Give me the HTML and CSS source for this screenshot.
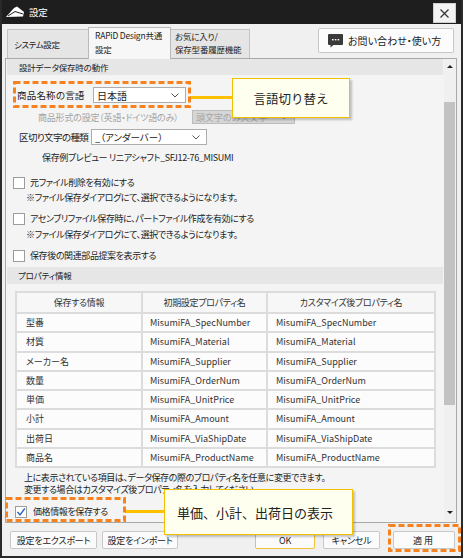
FILE: index.html
```html
<!DOCTYPE html>
<html lang="ja">
<head>
<meta charset="utf-8">
<title>設定</title>
<link rel="stylesheet" href="styles.css">
</head>
<body>
<div class="window">
  <div class="titlebar">
    <svg class="app-icon" width="20" height="12" viewBox="0 0 20 12"><polygon points="1,11 9,2 12,0.5 19,6 18,10.5" fill="#fff"/><polyline points="3,10 10,5.5 18,8" stroke="#1e1e1e" stroke-width="1" fill="none"/></svg>
    <span class="title">設定</span>
    <div class="close"><svg width="9" height="9" viewBox="0 0 9 9"><path d="M0.5 0.5L8.5 8.5M8.5 0.5L0.5 8.5" stroke="#333" stroke-width="1.2"/></svg></div>
  </div>
  <div class="tabrow">
    <div class="tab tab1">システム設定</div>
    <div class="tab tab-active">RAPiD Design共通<br>設定</div>
    <div class="tab tab3">お気に入り/<br>保存型番履歴機能</div>
    <div class="help-btn">
      <svg class="chat-icon" width="15" height="14" viewBox="0 0 15 14"><path d="M1 0h13a1 1 0 0 1 1 1v9a1 1 0 0 1-1 1H5.5L2.5 13.5V11H1a1 1 0 0 1-1-1V1a1 1 0 0 1 1-1z" fill="#3a3a3a"/><rect x="4" y="5" width="1.6" height="1.4" fill="#fff"/><rect x="6.8" y="5" width="1.6" height="1.4" fill="#fff"/><rect x="9.6" y="5" width="1.6" height="1.4" fill="#fff"/></svg>
      <span>お問い合わせ・使い方</span>
    </div>
  </div>
  <div class="panel">
    <div class="content">
      <div class="section-head">設計データ保存時の動作</div>
      <div class="row row-lang">
        <span class="lbl lbl-lang">商品名称の言語</span>
        <div class="select sel-lang"><span>日本語</span><svg width="8" height="5" viewBox="0 0 8 5"><polyline points="0.5,0.5 4,4 7.5,0.5" fill="none" stroke="#555" stroke-width="1"/></svg></div>
      </div>
      <div class="row row-format">
        <span class="disabled-text">商品形式の設定（英語・ドイツ語のみ）</span>
        <div class="select sel-disabled"><span>頭文字のみ大文字</span><svg width="8" height="5" viewBox="0 0 8 5"><polyline points="0.5,0.5 4,4 7.5,0.5" fill="none" stroke="#9a9a9a" stroke-width="1"/></svg></div>
      </div>
      <div class="row row-sep">
        <span class="lbl lbl-sep">区切り文字の種類</span>
        <div class="select sel-sep"><span>_（アンダーバー）</span><svg width="8" height="5" viewBox="0 0 8 5"><polyline points="0.5,0.5 4,4 7.5,0.5" fill="none" stroke="#555" stroke-width="1"/></svg></div>
      </div>
      <div class="preview">保存例プレビュー リニアシャフト_SFJ12-76_MISUMI</div>
      <div class="cb-row cb-first"><span class="checkbox"></span><span class="cb-label">元ファイル削除を有効にする</span></div>
      <div class="note">※ファイル保存ダイアログにて、選択できるようになります。</div>
      <div class="cb-row"><span class="checkbox"></span><span class="cb-label">アセンブリファイル保存時に、パートファイル作成を有効にする</span></div>
      <div class="note note2">※ファイル保存ダイアログにて、選択できるようになります。</div>
      <div class="cb-row"><span class="checkbox"></span><span class="cb-label">保存後の関連部品提案を表示する</span></div>
      <div class="section-head section-head2">プロパティ情報</div>
      <table class="props">
        <colgroup><col class="c1"><col class="c2"><col class="c3"></colgroup>
        <thead>
          <tr><th>保存する情報</th><th>初期設定プロパティ名</th><th>カスタマイズ後プロパティ名</th></tr>
        </thead>
        <tbody>
          <tr><td>型番</td><td>MisumiFA_SpecNumber</td><td>MisumiFA_SpecNumber</td></tr>
          <tr><td>材質</td><td>MisumiFA_Material</td><td>MisumiFA_Material</td></tr>
          <tr><td>メーカー名</td><td>MisumiFA_Supplier</td><td>MisumiFA_Supplier</td></tr>
          <tr><td>数量</td><td>MisumiFA_OrderNum</td><td>MisumiFA_OrderNum</td></tr>
          <tr><td>単価</td><td>MisumiFA_UnitPrice</td><td>MisumiFA_UnitPrice</td></tr>
          <tr><td>小計</td><td>MisumiFA_Amount</td><td>MisumiFA_Amount</td></tr>
          <tr><td>出荷日</td><td>MisumiFA_ViaShipDate</td><td>MisumiFA_ViaShipDate</td></tr>
          <tr><td>商品名</td><td>MisumiFA_ProductName</td><td>MisumiFA_ProductName</td></tr>
        </tbody>
      </table>
      <div class="help-text">上に表示されている項目は、データ保存の際のプロパティ名を任意に変更できます。<br>変更する場合はカスタマイズ後プロパティ名を入力してください。</div>
      <div class="cb-row cb-price"><span class="checkbox checked"><svg width="10" height="10" viewBox="0 0 10 10"><polyline points="1.5,5 4,7.8 8.8,1.5" fill="none" stroke="#2b63c6" stroke-width="1.4"/></svg></span><span class="cb-label">価格情報を保存する</span></div>
    </div>
    <div class="scrollbar">
      <div class="arrow-area"><span class="tri-up"></span></div>
      <div class="thumb"></div>
      <div class="arrow-area arrow-down"><span class="tri-down"></span></div>
    </div>
  </div>
  <div class="footer">
    <div class="btn btn-export">設定をエクスポート</div>
    <div class="btn btn-import">設定をインポート</div>
    <div class="btn btn-ok">OK</div>
    <div class="btn btn-cancel">キャンセル</div>
    <div class="btn btn-apply">適用</div>
  </div>
</div>

<svg class="annot-lines" width="463" height="558" viewBox="0 0 463 558">
  <line x1="190" y1="97.5" x2="233" y2="97.5" stroke="#ffc000" stroke-width="3"/>
  <line x1="125" y1="511.5" x2="165" y2="511.5" stroke="#ffc000" stroke-width="3"/>
  <rect x="14.5" y="82.5" width="175" height="24" fill="none" stroke="#f5821f" stroke-width="3" stroke-dasharray="6 3"/>
  <rect x="6.5" y="498.5" width="118" height="22" fill="none" stroke="#f5821f" stroke-width="3" stroke-dasharray="6 3"/>
  <rect x="389.5" y="525.5" width="70" height="25" fill="none" stroke="#f5821f" stroke-width="3" stroke-dasharray="6 3"/>
</svg>
<div class="callout callout-lang">言語切り替え</div>
<div class="callout callout-price">単価、小計、出荷日の表示</div>
</body>
</html>
```
FILE: styles.css
```css
html, body {
  margin: 0;
  padding: 0;
}
body {
  position: relative;
  width: 463px;
  height: 558px;
  overflow: hidden;
  font-family: "Noto Sans CJK JP", "Noto Sans", sans-serif;
  font-feature-settings: "palt";
  font-size: 9px;
  letter-spacing: -0.2px;
  color: #222;
  background: #f0f0f0;
  white-space: nowrap;
}
.window {
  box-sizing: border-box;
  width: 463px;
  height: 558px;
  border: 2px solid #2a2a2a;
  border-top: 0;
  background: #f0f0f0;
  display: flex;
  flex-direction: column;
}

/* title bar */
.titlebar {
  height: 24px;
  flex: none;
  background: #1e1e1e;
  display: flex;
  align-items: center;
  padding-left: 3px;
}
.app-icon { display: block; }
.title {
  margin-left: 4px;
  color: #fff;
  font-size: 9.5px;
  line-height: 12px;
}
.close {
  margin-left: auto;
  margin-right: 5px;
  align-self: flex-start;
  margin-top: 3px;
  box-sizing: border-box;
  width: 23px;
  height: 20px;
  background: #f2f2f2;
  border: 1px solid #cfcfcf;
  display: flex;
  align-items: center;
  justify-content: center;
}
.close svg { display: block; }

/* tabs */
.tabrow {
  height: 34px;
  flex: none;
  display: flex;
  align-items: flex-end;
  padding: 0 7px 0 5px;
}
.tab {
  box-sizing: border-box;
  border: 1px solid #c4c4c4;
  border-bottom: 0;
  background: #e5e5e5;
  font-size: 8.5px;
  line-height: 14px;
  color: #222;
}
.tab1 {
  width: 81px;
  height: 29px;
  display: flex;
  align-items: center;
  padding-left: 6px;
  border-right: 0;
  letter-spacing: -0.4px;
}
.tab-active {
  position: relative;
  z-index: 2;
  width: 83px;
  height: 32px;
  margin-bottom: -1px;
  background: #f7f7f7;
  padding-left: 6px;
  border-color: #b9b9b9;
}
.tab3 {
  width: 79px;
  height: 29px;
  padding-left: 4px;
  line-height: 13px;
  border-left: 0;
}
.help-btn {
  margin-left: auto;
  align-self: flex-start;
  margin-top: 4px;
  box-sizing: border-box;
  width: 136px;
  height: 25px;
  border: 1px solid #c9c9c9;
  border-radius: 2px;
  background: #fcfcfc;
  display: flex;
  align-items: center;
  padding-left: 9px;
  font-size: 10px;
  letter-spacing: 0;
  color: #222;
}
.chat-icon { display: block; margin-right: 5px; }

/* panel */
.panel {
  position: relative;
  z-index: 1;
  box-sizing: border-box;
  height: 465px;
  flex: none;
  margin: 0 4px 0 3px;
  border: 1px solid #a9a9a9;
  background: #f4f4f4;
  display: flex;
}
.content {
  flex: 1;
  min-width: 0;
  overflow: hidden;
  display: flex;
  flex-direction: column;
}
.section-head {
  height: 16px;
  flex: none;
  margin: 0 1px;
  background: #e6e6e6;
  font-size: 8.5px;
  line-height: 16px;
  padding-left: 12px;
  color: #222;
}
.section-head2 {
  height: 17px;
  line-height: 17px;
  margin-top: 4px;
  padding-left: 11px;
}
.row {
  display: flex;
  align-items: center;
  flex: none;
}
.row-lang { margin-top: 12px; height: 16px; padding-left: 11px; }
.row-format { margin-top: 7px; height: 14px; padding-left: 32px; }
.row-sep { margin-top: 5px; height: 16px; padding-left: 13px; }
.lbl { font-size: 9.5px; color: #222; letter-spacing: 0.2px; flex: none; overflow: hidden; }
.lbl-lang { width: 76px; }
.lbl-sep { width: 72px; letter-spacing: -0.6px; }
.select {
  box-sizing: border-box;
  height: 100%;
  background: #fff;
  border: 1px solid #adadad;
  display: flex;
  align-items: center;
  justify-content: space-between;
  padding: 0 6px 0 3px;
  font-size: 10px;
  letter-spacing: 0;
  color: #222;
  flex: none;
}
.select svg { display: block; }
.sel-lang { width: 93px; }
.sel-sep { width: 116px; font-size: 9.5px; }
.disabled-text {
  width: 150px;
  font-size: 9px;
  color: #a3a3a3;
}
.sel-disabled {
  width: 103px;
  margin-left: 4px;
  background: #d6d6d6;
  border-color: #bcbcbc;
  color: #a5a5a5;
  font-size: 9px;
}
.preview {
  margin-top: 6px;
  line-height: 13px;
  padding-left: 36px;
  flex: none;
  letter-spacing: -0.35px;
}
.cb-row {
  display: flex;
  align-items: center;
  height: 15px;
  margin-top: 6px;
  padding-left: 7px;
  flex: none;
}
.cb-first { margin-top: 11px; }
.checkbox {
  box-sizing: border-box;
  width: 12px;
  height: 12px;
  border: 1px solid #9c9c9c;
  background: #fff;
  display: flex;
  align-items: center;
  justify-content: center;
  flex: none;
}
.checkbox svg { display: block; }
.cb-label { margin-left: 5px; letter-spacing: -0.4px; }
.note {
  height: 15px;
  line-height: 15px;
  padding-left: 20px;
  flex: none;
  letter-spacing: -0.4px;
}
.note2 { margin-top: 1px; }

/* table */
.props {
  margin-top: 7px;
  margin-left: 9px;
  width: 419px;
  border-collapse: collapse;
  table-layout: fixed;
  border: 2px solid #cdcdcd;
  font-size: 9px;
  letter-spacing: 0;
  flex: none;
}
.props col.c1 { width: 126px; }
.props col.c2 { width: 125px; }
.props col.c3 { width: 168px; }
.props th, .props td {
  border: 2px solid #dcdcdc;
  padding: 0;
  white-space: nowrap;
  overflow: hidden;
}
.props th {
  height: 19px;
  font-weight: normal;
  background: #f7f7f7;
  color: #333;
  text-align: center;
  letter-spacing: -0.3px;
}
.props td {
  height: 17.25px;
  background: #fcfcfc;
  color: #333;
}
.props td:nth-child(1) { padding-left: 9px; }
.props td:nth-child(2) { padding-left: 7px; }
.props td:nth-child(3) { padding-left: 8px; }
.help-text {
  margin-top: 4px;
  padding-left: 18px;
  line-height: 12px;
  flex: none;
  letter-spacing: -0.4px;
}
.cb-price { margin-top: 8px; padding-left: 9px; }
.cb-price .cb-label { margin-left: 6px; }

/* scrollbar */
.scrollbar {
  width: 12px;
  flex: none;
  background: #f0f0f0;
  display: flex;
  flex-direction: column;
  align-items: center;
}
.arrow-area {
  height: 14px;
  width: 12px;
  display: flex;
  align-items: center;
  justify-content: center;
  flex: none;
}
.arrow-down { margin-top: auto; margin-bottom: 3px; }
.tri-up {
  width: 0; height: 0;
  border-left: 3px solid transparent;
  border-right: 3px solid transparent;
  border-bottom: 3px solid #222;
}
.tri-down {
  width: 0; height: 0;
  border-left: 3px solid transparent;
  border-right: 3px solid transparent;
  border-top: 3px solid #222;
}
.thumb {
  margin-top: 29px;
  width: 11px;
  height: 303px;
  background: #c2c2c2;
  flex: none;
  align-self: flex-start;
}

/* footer */
.footer {
  display: flex;
  padding: 8px 6px 0 8px;
}
.btn {
  box-sizing: border-box;
  height: 18px;
  border: 1px solid #c8c8c8;
  border-radius: 2px;
  background: #fbfbfb;
  font-size: 9px;
  display: flex;
  align-items: center;
  justify-content: center;
  color: #222;
}
.btn-export { width: 87px; }
.btn-import { width: 76px; margin-left: 5px; }
.btn-ok { width: 60px; margin-left: auto; border: 1.5px solid #f0c23b; }
.btn-cancel { width: 57px; margin-left: 8px; }
.btn-apply { width: 62px; margin-left: 13px; letter-spacing: 2px; }

/* annotation overlay */
.annot-lines {
  position: absolute;
  left: 0;
  top: 0;
  z-index: 5;
  pointer-events: none;
}
.callout {
  position: absolute;
  z-index: 6;
  box-sizing: border-box;
  border: 1.5px solid #f1c000;
  background: #fffff0;
  box-shadow: 2px 2px 2px rgba(0, 0, 0, 0.22);
  display: flex;
  align-items: center;
  justify-content: center;
  font-feature-settings: normal;
  letter-spacing: 0;
  color: #222;
}
.callout-lang {
  left: 232px;
  top: 78px;
  width: 118px;
  height: 40px;
  font-size: 12.5px;
}
.callout-price {
  left: 164px;
  top: 489px;
  width: 189px;
  height: 46px;
  font-size: 13px;
  justify-content: flex-start;
  padding-left: 12px;
}
```
